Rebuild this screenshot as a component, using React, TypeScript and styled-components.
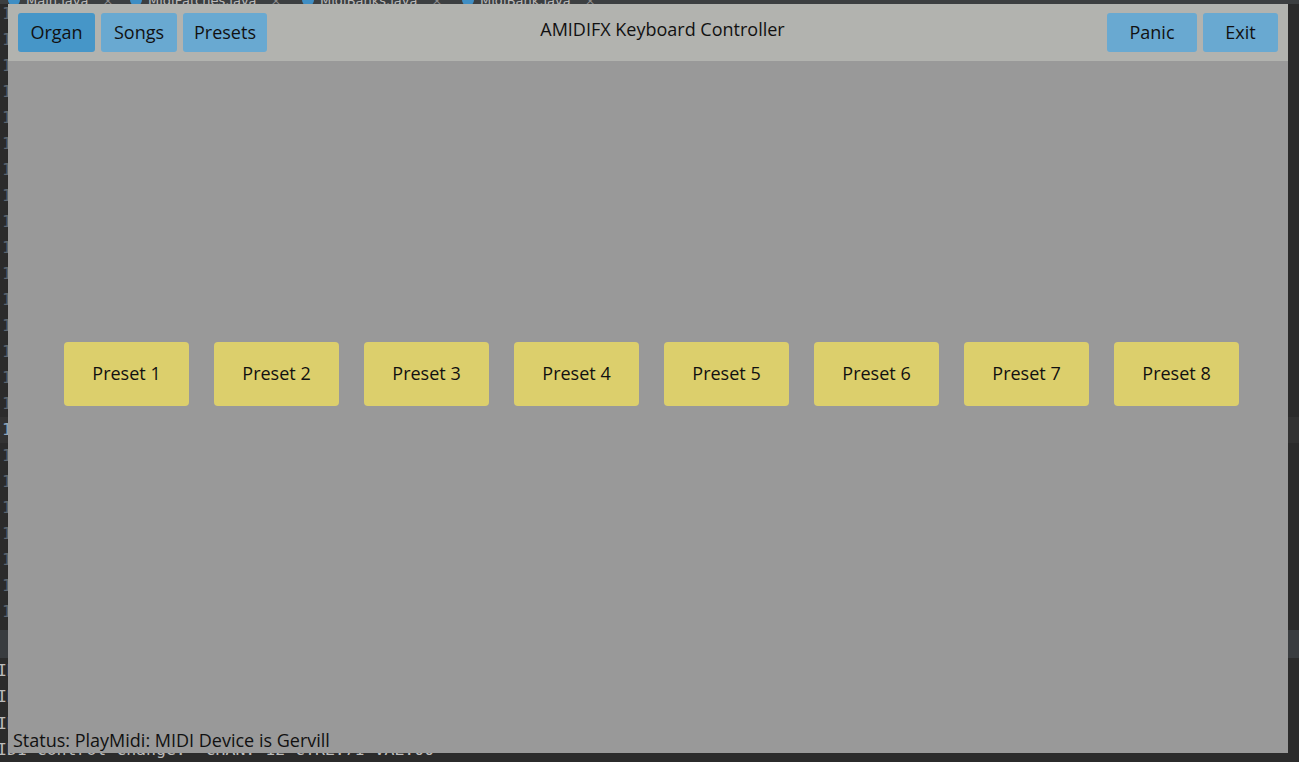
import React from "react";
import styled, { createGlobalStyle } from "styled-components";

const Global = createGlobalStyle`
  html, body { margin: 0; padding: 0; background: #2b2b2b; overflow: hidden; }
  #root { width: 1299px; height: 762px; }
  * { box-sizing: border-box; }
`;

const Desktop = styled.div`
  position: relative;
  width: 1299px;
  height: 762px;
  overflow: hidden;
  display: flex;
  flex-direction: column;
  background: #2b2b2b;
  font-family: "DejaVu Sans Mono", "Liberation Mono", monospace;
`;

const TabBar = styled.div`
  flex: none;
  height: 4px;
  background: #3c3f41;
  overflow: hidden;
  display: flex;
  align-items: flex-end;
  padding-left: 8px;
`;

const Tab = styled.div<{ $w: number }>`
  flex: none;
  width: ${(p) => p.$w}px;
  height: 20px;
  margin-bottom: -6px;
  display: flex;
  align-items: center;
  gap: 6px;
  font-family: "DejaVu Sans", sans-serif;
  font-size: 13px;
  color: #bbbbbb;
`;

const TabIcon = styled.span`
  width: 12px;
  height: 12px;
  border-radius: 50%;
  background: #3f8ec4;
  flex: none;
`;

const TabClose = styled.span`
  color: #8c8c8c;
  margin-left: 8px;
`;

const Editor = styled.div`
  flex: 1;
  overflow: hidden;
`;

const Lines = styled.div`
  margin-top: -3px;
  display: flex;
  flex-direction: column;
`;

const Line = styled.div<{ $active?: boolean }>`
  height: 26px;
  line-height: 26px;
  padding-left: 2px;
  font-size: 16px;
  color: ${(p) => (p.$active ? "#8fa6bd" : "#5d6670")};
  background: ${(p) => (p.$active ? "#323232" : "transparent")};
`;

const ConsoleHeader = styled.div`
  flex: none;
  height: 28px;
  background: #393c3f;
`;

const Console = styled.div`
  flex: none;
  height: 104px;
  display: flex;
  flex-direction: column;
`;

const ConsoleLine = styled.div`
  height: 26.3px;
  line-height: 26.3px;
  font-size: 16.5px;
  color: #bbbbbb;
  margin-left: -3px;
  white-space: pre;
`;

const AppWindow = styled.div`
  position: absolute;
  left: 8px;
  top: 4px;
  width: 1280px;
  height: 749px;
  display: flex;
  flex-direction: column;
  background: #999999;
  font-family: "Open Sans", "Noto Sans", sans-serif;
  color: #111111;
`;

const Header = styled.div`
  flex: none;
  height: 57px;
  background: #b2b3af;
  display: grid;
  grid-template-columns: 1fr auto 1fr;
  align-items: center;
  padding: 0 10px;
`;

const Group = styled.div<{ $end?: boolean }>`
  display: flex;
  gap: 6px;
  justify-content: ${(p) => (p.$end ? "flex-end" : "flex-start")};
`;

const Title = styled.div`
  font-size: 18px;
  padding-left: 29px;
  margin-top: -7px;
`;

const NavButton = styled.button<{ $w: number; $active?: boolean }>`
  width: ${(p) => p.$w}px;
  height: 39px;
  border: none;
  border-radius: 3px;
  padding: 0 0 2px;
  background: ${(p) => (p.$active ? "#4696c8" : "#69a9d1")};
  font-family: "Open Sans", "Noto Sans", sans-serif;
  font-size: 18px;
  color: #111111;
`;

const Main = styled.div`
  flex: 1;
  display: flex;
  flex-direction: column;
`;

const PresetRow = styled.div`
  display: flex;
  gap: 25px;
  padding: 281px 0 0 56px;
`;

const PresetButton = styled.button`
  width: 125px;
  height: 64px;
  border: none;
  border-radius: 4px;
  padding: 0 0 2px;
  background: #dccf6c;
  font-family: "Open Sans", "Noto Sans", sans-serif;
  font-size: 18px;
  color: #111111;
`;

const Status = styled.div`
  margin-top: auto;
  padding: 0 0 1px 5px;
  font-size: 18px;
  line-height: 24px;
  white-space: nowrap;
`;

const tabs = [
  { name: "Main.java", w: 122 },
  { name: "MidiPatches.java", w: 172 },
  { name: "MidiBanks.java", w: 160 },
  { name: "MidiBank.java", w: 150 },
];

const consoleLines = [
  "ID1 Control Change:  CHAN: 12 CTRL:74 VAL:00",
  "ID1 Control Change:  CHAN: 12 CTRL:72 VAL:00",
  "ID1 Control Change:  CHAN: 12 CTRL:73 VAL:00",
  "ID1 Control Change:  CHAN: 12 CTRL:71 VAL:00",
];

export default function App() {
  const lineNums = Array.from({ length: 25 }, (_, i) => 100 + i);
  return (
    <>
      <Global />
      <Desktop>
        <TabBar>
          {tabs.map((t) => (
            <Tab key={t.name} $w={t.w}>
              <TabIcon />
              <span>{t.name}</span>
              <TabClose>×</TabClose>
            </Tab>
          ))}
        </TabBar>
        <Editor>
          <Lines>
            {lineNums.map((n, i) => (
              <Line key={n} $active={i === 16}>
                {n}
              </Line>
            ))}
          </Lines>
        </Editor>
        <ConsoleHeader />
        <Console>
          {consoleLines.map((l, i) => (
            <ConsoleLine key={i}>{l}</ConsoleLine>
          ))}
        </Console>

        <AppWindow>
          <Header>
            <Group>
              <NavButton $w={77} $active>
                Organ
              </NavButton>
              <NavButton $w={76}>Songs</NavButton>
              <NavButton $w={84}>Presets</NavButton>
            </Group>
            <Title>AMIDIFX Keyboard Controller</Title>
            <Group $end>
              <NavButton $w={90}>Panic</NavButton>
              <NavButton $w={75}>Exit</NavButton>
            </Group>
          </Header>
          <Main>
            <PresetRow>
              {Array.from({ length: 8 }, (_, i) => (
                <PresetButton key={i}>Preset {i + 1}</PresetButton>
              ))}
            </PresetRow>
            <Status>Status: PlayMidi: MIDI Device is Gervill</Status>
          </Main>
        </AppWindow>
      </Desktop>
    </>
  );
}
